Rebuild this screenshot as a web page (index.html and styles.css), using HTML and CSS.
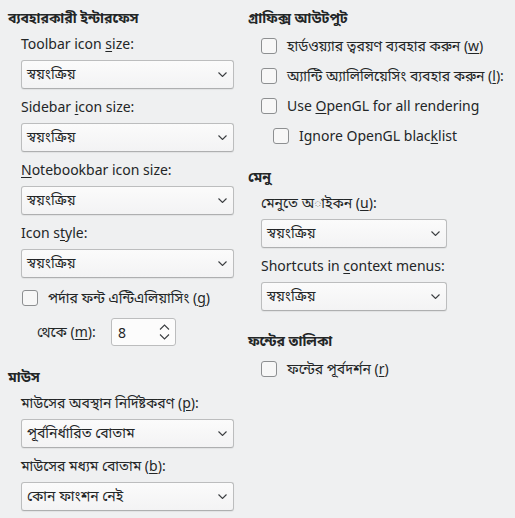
FILE: index.html
```html
<!DOCTYPE html>
<html lang="bn">
<head>
<meta charset="utf-8">
<link rel="stylesheet" href="styles.css">
</head>
<body>
<div class="page">
  <div class="col left">
    <div class="head">ব্যবহারকারী ইন্টারফেস</div>
    <div class="field first">
      <div class="label">Toolbar icon <u>s</u>ize:</div>
      <div class="select"><span>স্বয়ংক্রিয়</span><svg class="chev" width="9" height="5" viewBox="0 0 9 5"><path d="M0.5 0.5 L4.5 4.5 L8.5 0.5" fill="none" stroke="#3b3e41" stroke-width="1.1"/></svg></div>
    </div>
    <div class="field">
      <div class="label">Sidebar <u>i</u>con size:</div>
      <div class="select"><span>স্বয়ংক্রিয়</span><svg class="chev" width="9" height="5" viewBox="0 0 9 5"><path d="M0.5 0.5 L4.5 4.5 L8.5 0.5" fill="none" stroke="#3b3e41" stroke-width="1.1"/></svg></div>
    </div>
    <div class="field">
      <div class="label"><u>N</u>otebookbar icon size:</div>
      <div class="select"><span>স্বয়ংক্রিয়</span><svg class="chev" width="9" height="5" viewBox="0 0 9 5"><path d="M0.5 0.5 L4.5 4.5 L8.5 0.5" fill="none" stroke="#3b3e41" stroke-width="1.1"/></svg></div>
    </div>
    <div class="field">
      <div class="label">Icon s<u>t</u>yle:</div>
      <div class="select"><span>স্বয়ংক্রিয়</span><svg class="chev" width="9" height="5" viewBox="0 0 9 5"><path d="M0.5 0.5 L4.5 4.5 L8.5 0.5" fill="none" stroke="#3b3e41" stroke-width="1.1"/></svg></div>
    </div>
    <div class="check aa"><span class="box"></span><span>পর্দার ফন্ট এন্টিএলিয়াসিং (<u>g</u>)</span></div>
    <div class="spinrow">
      <span class="spinlabel">থেকে (<u>m</u>):</span>
      <div class="spin"><span>8</span><svg class="spinarrows" width="11" height="16" viewBox="0 0 11 16"><path d="M1 5.5 L5.5 1 L10 5.5" fill="none" stroke="#3b3e41" stroke-width="1.1"/><path d="M1 10.5 L5.5 15 L10 10.5" fill="none" stroke="#3b3e41" stroke-width="1.1"/></svg></div>
    </div>
    <div class="head mouse">মাউস</div>
    <div class="field first">
      <div class="label">মাউসের অবস্থান নির্দিষ্টকরণ (<u>p</u>):</div>
      <div class="select"><span>পূর্বনির্ধারিত বোতাম</span><svg class="chev" width="9" height="5" viewBox="0 0 9 5"><path d="M0.5 0.5 L4.5 4.5 L8.5 0.5" fill="none" stroke="#3b3e41" stroke-width="1.1"/></svg></div>
    </div>
    <div class="field">
      <div class="label">মাউসের মধ্যম বোতাম (<u>b</u>):</div>
      <div class="select"><span>কোন ফাংশন নেই</span><svg class="chev" width="9" height="5" viewBox="0 0 9 5"><path d="M0.5 0.5 L4.5 4.5 L8.5 0.5" fill="none" stroke="#3b3e41" stroke-width="1.1"/></svg></div>
    </div>
  </div>
  <div class="col right">
    <div class="head">গ্রাফিক্স আউটপুট</div>
    <div class="checks">
      <div class="check"><span class="box"></span><span>হার্ডওয়্যার ত্বরয়ণ ব্যবহার করুন (<u>w</u>)</span></div>
      <div class="check"><span class="box"></span><span>অ্যান্টি অ্যালিলিয়েসিং ব্যবহার করুন (<u>l</u>):</span></div>
      <div class="check"><span class="box"></span><span>Use <u>O</u>penGL for all rendering</span></div>
      <div class="check sub"><span class="box"></span><span>Ignore OpenGL blac<u>k</u>list</span></div>
    </div>
    <div class="head menu">মেনু</div>
    <div class="field first">
      <div class="label">মেনুতে অাইকন (<u>u</u>):</div>
      <div class="select"><span>স্বয়ংক্রিয়</span><svg class="chev" width="9" height="5" viewBox="0 0 9 5"><path d="M0.5 0.5 L4.5 4.5 L8.5 0.5" fill="none" stroke="#3b3e41" stroke-width="1.1"/></svg></div>
    </div>
    <div class="field">
      <div class="label">Shortcuts in <u>c</u>ontext menus:</div>
      <div class="select"><span>স্বয়ংক্রিয়</span><svg class="chev" width="9" height="5" viewBox="0 0 9 5"><path d="M0.5 0.5 L4.5 4.5 L8.5 0.5" fill="none" stroke="#3b3e41" stroke-width="1.1"/></svg></div>
    </div>
    <div class="head fonts">ফন্টের তালিকা</div>
    <div class="checks">
      <div class="check"><span class="box"></span><span>ফন্টের পূর্বদর্শন (<u>r</u>)</span></div>
    </div>
  </div>
</div>
</body>
</html>
```

FILE: styles.css
```css
html, body {
  margin: 0;
  padding: 0;
  background: #eff0f1;
}
body {
  width: 515px;
  height: 518px;
  overflow: hidden;
  font-family: "Noto Sans", "Noto Sans Bengali", "Lohit Bengali", "FreeSans", sans-serif;
  font-size: 14px;
  color: #232627;
}
u {
  text-decoration-thickness: 1px;
  text-underline-offset: 2px;
}
.page {
  display: grid;
  grid-template-columns: 226px 199px;
  column-gap: 14px;
  padding: 8px 0 0 8px;
}
.col {
  display: flex;
  flex-direction: column;
}
.head {
  font-weight: bold;
  font-size: 14px;
  height: 20px;
  line-height: 20px;
  white-space: nowrap;
}
.field {
  display: flex;
  flex-direction: column;
  padding-left: 13px;
  margin-top: 8px;
}
.field.first {
  margin-top: 6px;
}
.label {
  height: 20px;
  line-height: 20px;
  white-space: nowrap;
}
.select {
  margin-top: 6px;
  height: 27px;
  border: 1px solid #bcbdbe;
  border-bottom-color: #aeafb0;
  border-radius: 3px;
  background: linear-gradient(#fbfbfb, #f3f3f4);
  box-shadow: 0 1px 1px rgba(0,0,0,0.06);
  display: flex;
  align-items: center;
  justify-content: space-between;
  padding: 0 6px 0 5px;
  white-space: nowrap;
}
.chev {
  display: block;
}
.check {
  display: flex;
  align-items: center;
  height: 20px;
  line-height: 20px;
  white-space: nowrap;
}
.box {
  width: 14px;
  height: 14px;
  border: 1px solid #8d8f91;
  border-radius: 3px;
  background: #f7f7f7;
  margin-right: 10px;
  flex: none;
}
.check.aa {
  margin-top: 10px;
  padding-left: 14px;
}
.checks {
  display: flex;
  flex-direction: column;
  gap: 10px;
  margin-top: 8px;
  padding-left: 13px;
}
.check.sub {
  padding-left: 12px;
}
.spinrow {
  display: flex;
  align-items: center;
  margin-top: 10px;
  padding-left: 29px;
}
.spinlabel {
  width: 74px;
  white-space: nowrap;
}
.spin {
  height: 26px;
  border: 1px solid #bcbdbe;
  border-radius: 3px;
  background: #fcfcfc;
  display: flex;
  align-items: center;
  justify-content: space-between;
  padding: 0 5px 0 6px;
  box-sizing: content-box;
  width: 52px;
}
.spinarrows {
  display: block;
}
.head.mouse {
  margin-top: 21px;
}
.head.menu {
  margin-top: 21px;
}
.head.fonts {
  margin-top: 20px;
}
```
